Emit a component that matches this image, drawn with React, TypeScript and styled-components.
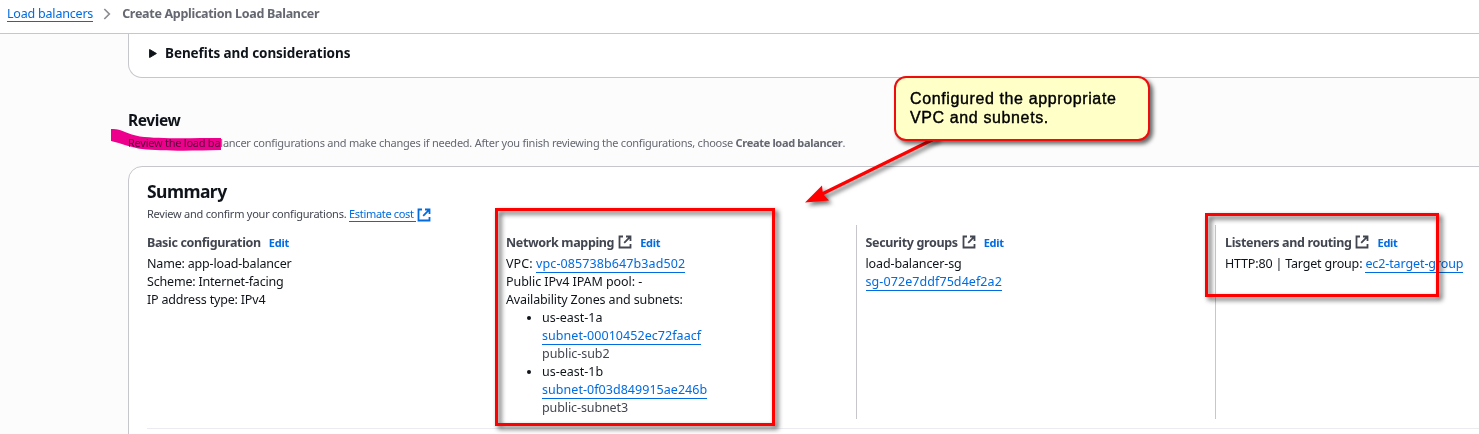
import React from "react";
import styled, { createGlobalStyle } from "styled-components";

const GlobalStyle = createGlobalStyle`
  * { box-sizing: border-box; }
  html, body { margin: 0; background: #fcfcfd; }
  body { overflow: hidden; font-family: "Noto Sans", "Open Sans", sans-serif; color: #0f141a; }
`;

const Page = styled.div`
  position: relative;
  width: 1479px;
  height: 434px;
  overflow: hidden;
  background: #fcfcfd;
`;

const Header = styled.header`
  height: 34px;
  display: flex;
  align-items: center;
  padding: 0 7px 6px;
  background: #fff;
  border-bottom: 1px solid #c6c6cd;
  font-size: 12.5px;
  white-space: nowrap;
`;

const Crumb = styled.strong`
  color: #656871;
  font-weight: 700;
  letter-spacing: -0.3px;
`;

const Link = styled.a<{ $ls?: number }>`
  color: #006ce0;
  line-height: 15px;
  display: inline-block;
  vertical-align: top;
  border-bottom: 1px solid #006ce0;
  letter-spacing: ${(p) => p.$ls ?? 0}px;
`;

const Chevron = styled.svg`
  margin: 1px 11px 0 10px;
`;

const Main = styled.main`
  margin-left: 128px;
  width: 1400px;
`;

const ExpandCard = styled.section`
  height: 44px;
  display: flex;
  align-items: center;
  gap: 8px;
  padding: 0 0 5px 20px;
  background: #fff;
  border: 1px solid #c6c6cd;
  border-top: 0;
  border-radius: 0 0 14px 14px;
  font-size: 13.5px;
  font-weight: 700;
  letter-spacing: -0.08px;
`;

const Intro = styled.div`
  height: 88px;
  padding-top: 31px;
  white-space: nowrap;
`;

const IntroTitle = styled.h2`
  margin: 0;
  font-size: 15.5px;
  line-height: 22px;
  letter-spacing: -0.4px;
`;

const IntroText = styled.p`
  margin: 4px 0 0;
  font-size: 11px;
  line-height: 16px;
  letter-spacing: -0.25px;
  color: #656871;
  b { letter-spacing: -0.33px; }
`;

const SummaryCard = styled.section`
  height: 300px;
  padding: 12px 18px 0;
  background: #fff;
  border: 1px solid #c6c6cd;
  border-radius: 14px 0 0 0;
`;

const SummaryTitle = styled.h3`
  margin: 0;
  font-size: 17.5px;
  line-height: 24px;
  letter-spacing: -0.55px;
`;

const SummaryText = styled.p`
  margin: 3px 0 0;
  display: flex;
  align-items: flex-start;
  height: 19px;
  font-size: 11px;
  line-height: 16px;
  letter-spacing: -0.24px;
  color: #424650;
  white-space: pre;
`;

const Columns = styled.div`
  display: flex;
  height: 204px;
  border-bottom: 1px solid #ebebf0;
`;

const Column = styled.div<{ $first?: boolean }>`
  flex: none;
  width: ${(p) => (p.$first ? 349 : 359.5)}px;
  height: 194px;
  padding: 8px 0 0 ${(p) => (p.$first ? 0 : 9)}px;
  border-left: ${(p) => (p.$first ? "0" : "1px solid #c6c6cd")};
`;

const ColumnHead = styled.div`
  display: flex;
  align-items: center;
  height: 18px;
  margin-bottom: 4px;
  font-size: 12.5px;
  font-weight: 700;
  color: #424650;
  white-space: nowrap;
`;

const Heading = styled.span`
  letter-spacing: -0.35px;
`;

const Edit = styled.a`
  margin-left: 8px;
  font-size: 11px;
  letter-spacing: -0.25px;
  color: #006ce0;
`;

const Line = styled.div<{ $ls?: number; $muted?: boolean }>`
  height: 18px;
  font-size: 12.5px;
  line-height: 18px;
  white-space: pre;
  letter-spacing: ${(p) => p.$ls ?? 0}px;
  color: ${(p) => (p.$muted ? "#424650" : "#0f141a")};
  a { line-height: 17px; }
`;

const Subnets = styled.ul`
  margin: 0;
  padding: 0 0 0 36px;
  list-style: none;
`;

const Subnet = styled.li`
  position: relative;
  &::before {
    content: "";
    position: absolute;
    left: -15px;
    top: 7px;
    width: 4px;
    height: 4px;
    border-radius: 50%;
    background: #0f141a;
  }
`;

const Marker = styled.svg`
  position: absolute;
  left: 110px;
  top: 125px;
  mix-blend-mode: multiply;
`;

const Frame = styled.div<{ $x: number; $y: number; $w: number; $h: number }>`
  position: absolute;
  left: ${(p) => p.$x}px;
  top: ${(p) => p.$y}px;
  width: ${(p) => p.$w}px;
  height: ${(p) => p.$h}px;
  border: 3px solid #fe0000;
  filter: drop-shadow(3px 3px 2.5px rgba(0, 0, 0, 0.7));
`;

const Arrow = styled.svg`
  position: absolute;
  left: 790px;
  top: 130px;
  overflow: visible;
  filter: drop-shadow(3px 3px 2px rgba(0, 0, 0, 0.55));
`;

const Callout = styled.div`
  position: absolute;
  left: 894px;
  top: 76px;
  width: 256px;
  height: 65px;
  padding: 11px 14px;
  border: 2px solid #ee0c0c;
  border-radius: 12px;
  background: #ffffc8;
  box-shadow: 3px 3px 4px rgba(0, 0, 0, 0.6);
  font: 16px/19px "Liberation Sans", Arial, sans-serif;
  letter-spacing: 0.62px;
  color: #000;
  -webkit-text-stroke: 0.4px #000;
  white-space: nowrap;
`;

const ExternalSvg = styled.svg<{ $gap: number; $drop?: number }>`
  flex: none;
  margin-left: ${(p) => p.$gap}px;
  margin-top: ${(p) => p.$drop ?? 0}px;
`;

function External({ color, gap, drop }: { color: string; gap: number; drop?: number }) {
  return (
    <ExternalSvg $gap={gap} $drop={drop} width="14" height="14" viewBox="0 0 14 14" fill="none" stroke={color} strokeWidth="1.8">
      <path d="M5 1.500H1.500v11h11V9" />
      <path d="M8 1.500h4.500V6M12.300 1.700 6.200 7.800" />
    </ExternalSvg>
  );
}

function Title({ text, external }: { text: string; external?: boolean }) {
  return (
    <ColumnHead>
      <Heading>{text}</Heading>
      {external && <External color="#424650" gap={4} />}
      <Edit>Edit</Edit>
    </ColumnHead>
  );
}

export default function App() {
  return (
    <Page>
      <GlobalStyle />
      <Header>
        <Link $ls={-0.2}>Load balancers</Link>
        <Chevron width="8" height="12" viewBox="0 0 8 12" fill="none" stroke="#8c8c94" strokeWidth="1.7">
          <path d="M1.300 1 6.300 6l-5 5" />
        </Chevron>
        <Crumb>Create Application Load Balancer</Crumb>
      </Header>
      <Main>
        <ExpandCard>
          <svg width="8" height="9" viewBox="0 0 8 9"><path d="M.6.5 7.4 4.5.6 8.5z" fill="#0f141a" stroke="#0f141a" strokeLinejoin="round" /></svg>
          Benefits and considerations
        </ExpandCard>
        <Intro>
          <IntroTitle>Review</IntroTitle>
          <IntroText>
            Review the load balancer configurations and make changes if needed. After you finish reviewing the configurations, choose <b>Create load balancer</b>.
          </IntroText>
        </Intro>
        <SummaryCard>
          <SummaryTitle>Summary</SummaryTitle>
          <SummaryText>
            {"Review and confirm your configurations. "}
            <Link $ls={-0.32}>{"Estimate cost "}</Link>
            <External color="#006ce0" gap={1} drop={2} />
          </SummaryText>
          <Columns>
            <Column $first>
              <Title text="Basic configuration" />
              <Line $ls={-0.18}>Name: app-load-balancer</Line>
              <Line $ls={-0.19}>Scheme: Internet-facing</Line>
              <Line $ls={-0.18}>IP address type: IPv4</Line>
            </Column>
            <Column>
              <Title text="Network mapping" external />
              <Line $ls={0.1}>{"VPC: "}<Link $ls={0.1}>vpc-085738b647b3ad502</Link></Line>
              <Line $ls={-0.06}>Public IPv4 IPAM pool: -</Line>
              <Line $ls={-0.13}>Availability Zones and subnets:</Line>
              <Subnets>
                <Subnet>
                  <Line>us-east-1a</Line>
                  <Line><Link $ls={0.05}>subnet-00010452ec72faacf</Link></Line>
                  <Line $muted $ls={-0.05}>public-sub2</Line>
                </Subnet>
                <Subnet>
                  <Line>us-east-1b</Line>
                  <Line><Link $ls={0.04}>subnet-0f03d849915ae246b</Link></Line>
                  <Line $muted $ls={-0.1}>public-subnet3</Line>
                </Subnet>
              </Subnets>
            </Column>
            <Column>
              <Title text="Security groups" external />
              <Line $ls={-0.12}>load-balancer-sg</Line>
              <Line><Link $ls={0.08}>sg-072e7ddf75d4ef2a2</Link></Line>
            </Column>
            <Column>
              <Title text="Listeners and routing" external />
              <Line $ls={-0.18}>{"HTTP:80 | Target group: "}<Link $ls={-0.1}>ec2-target-group</Link></Line>
            </Column>
          </Columns>
        </SummaryCard>
      </Main>
      <Marker width="112" height="28" viewBox="0 0 112 28">
        <path d="M1 4C10 3 17 9 30 11.500 50 14 80 13 111 13V25C80 26 50 26 32 24 22 23 11 18 1 16Z" fill="#f0008c" />
      </Marker>
      <Frame $x={495} $y={208} $w={280} $h={218} />
      <Frame $x={1205} $y={213} $w={234} $h={84} />
      <Arrow width="160" height="80" viewBox="0 0 160 80">
        <path d="M148 7 30 65" stroke="#fe0000" strokeWidth="3.2" />
        <path d="M15 72.500 32 55.500 33 64 39 70.500Z" fill="#fe0000" />
      </Arrow>
      <Callout>
        Configured the appropriate
        <br />
        VPC and subnets.
      </Callout>
    </Page>
  );
}
